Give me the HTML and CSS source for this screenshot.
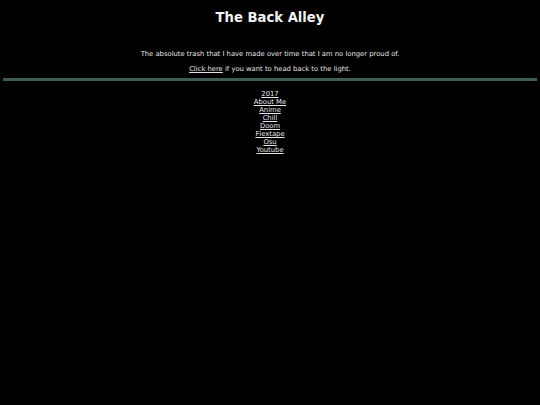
FILE: index.html
```html
<!DOCTYPE html>
<html>
<head>
<meta charset="utf-8">
<link rel="stylesheet" href="styles.css">
</head>
<body>
<h1 class="title">The Back Alley</h1>
<p class="intro">The absolute trash that I have made over time that I am no longer proud of.</p>
<p class="back"><a href="#">Click here</a> if you want to head back to the light.</p>
<hr class="rule">
<ul class="links">
<li><a href="#">2017</a></li>
<li><a href="#">About Me</a></li>
<li><a href="#">Anime</a></li>
<li><a href="#">Chill</a></li>
<li><a href="#">Doom</a></li>
<li><a href="#">Flextape</a></li>
<li><a href="#">Osu</a></li>
<li><a href="#">Youtube</a></li>
</ul>
</body>
</html>
```
FILE: styles.css
```css
html, body {
  margin: 0;
  padding: 0;
  background: #000;
}
body {
  color: #e6e6e6;
  font-family: "DejaVu Sans", Verdana, sans-serif;
  text-align: center;
  padding: 0 3px;
}
a {
  color: #e6e6e6;
}
.title {
  margin: 0;
  padding-top: 10px;
  font-size: 13.2px;
  line-height: 16px;
  font-weight: bold;
  color: #f2f2f2;
}
.intro {
  margin: 0;
  padding-top: 24px;
  font-size: 6.8px;
  line-height: 8px;
}
.back {
  margin: 0;
  padding-top: 7px;
  font-size: 6.8px;
  line-height: 8px;
}
.rule {
  margin: 5px 0 0 0;
  height: 3px;
  border: 0;
  background: #3d5c5a;
}
.links {
  list-style: none;
  margin: 0;
  padding: 9px 0 0 0;
  font-size: 6.8px;
  line-height: 8px;
}
```
